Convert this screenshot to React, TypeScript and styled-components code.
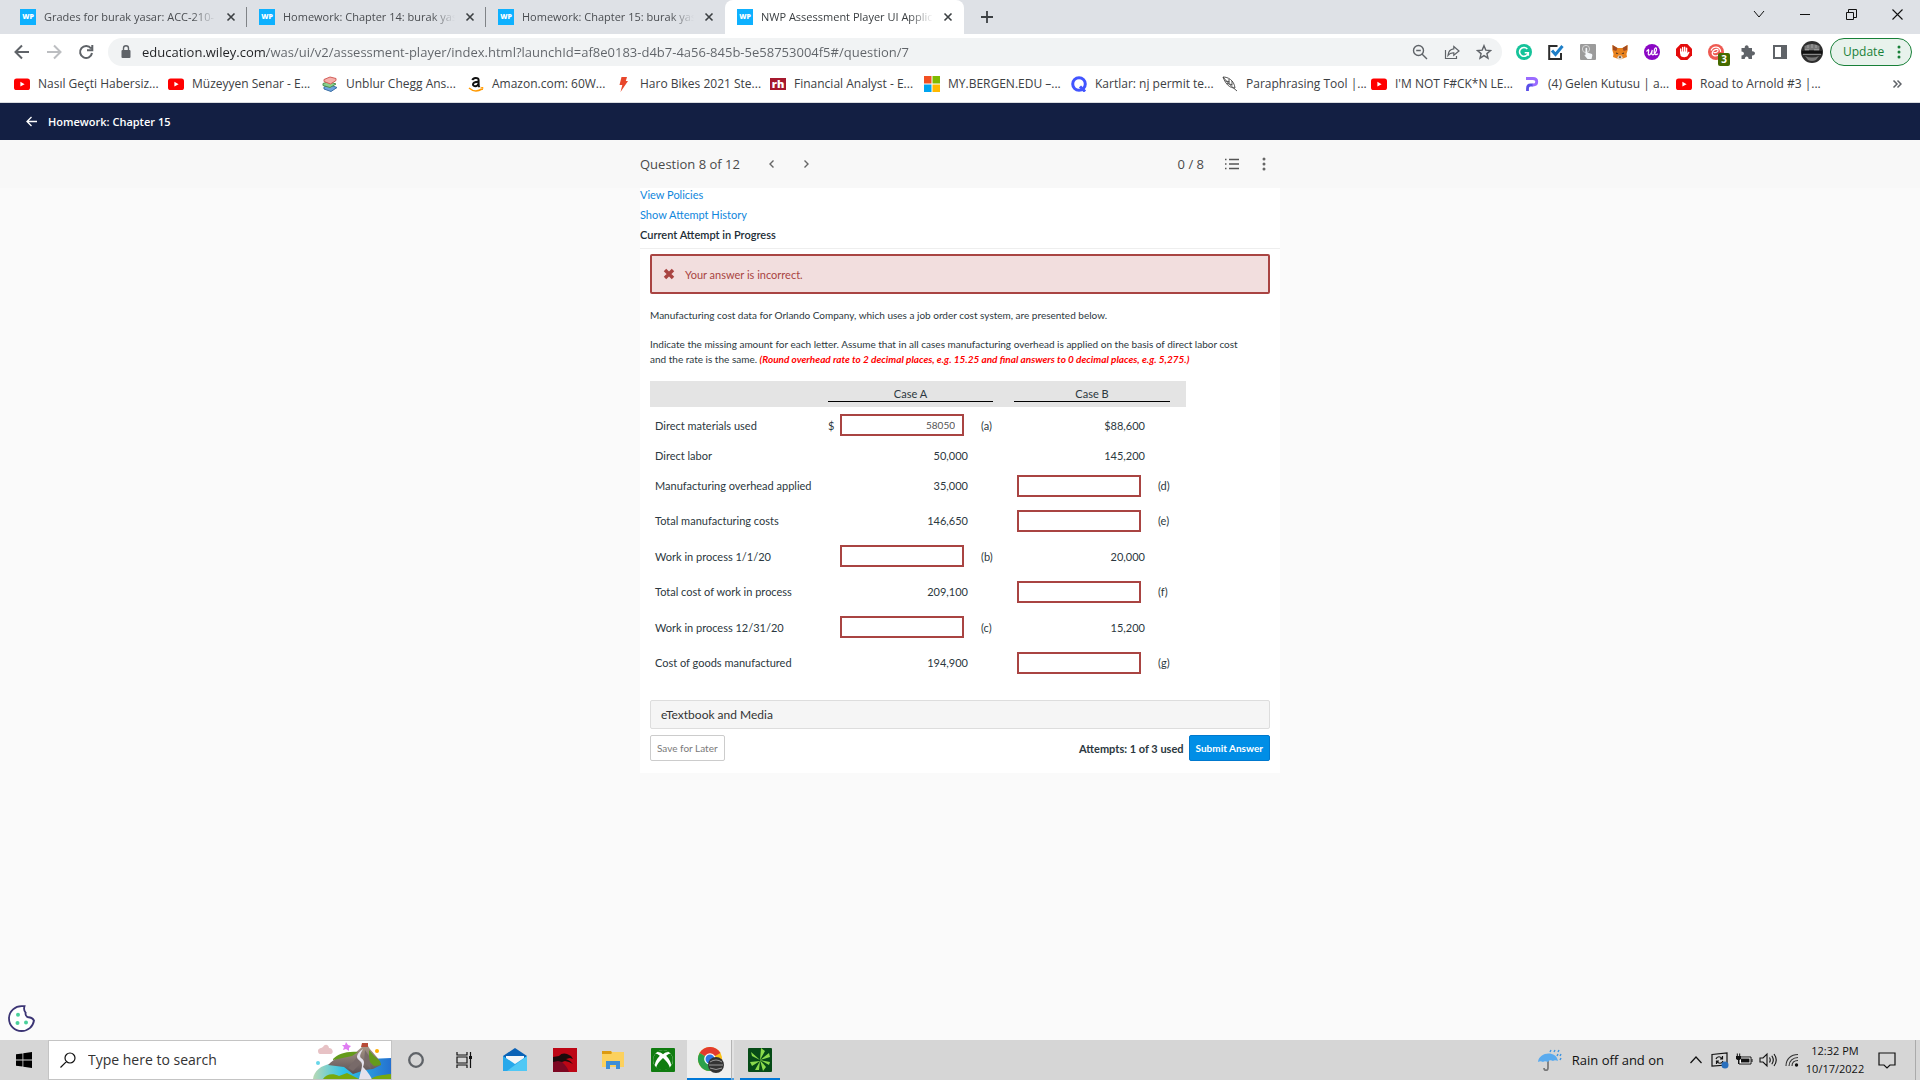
import React from "react";
import styled, { createGlobalStyle } from "styled-components";

const UI_FONT = '"Open Sans", "Noto Sans", sans-serif';
const PAGE_FONT = 'Lato, "Noto Sans", sans-serif';

const GlobalStyle = createGlobalStyle`
  *, *::before, *::after { box-sizing: border-box; }
  body { margin: 0; background: #fafafa; font-family: ${UI_FONT}; }
  button, input { font-family: inherit; }
  button { cursor: pointer; }
  svg { display: block; flex: none; }
`;

const Shell = styled.div`
  display: flex;
  flex-direction: column;
  min-height: 100vh;
`;

const PlainButton = styled.button`
  display: flex;
  align-items: center;
  justify-content: center;
  flex: none;
  padding: 0;
  border: 0;
  background: none;
  color: #5f6368;
`;

/* ---------- Tab strip ---------- */

const TabStrip = styled.header`
  display: flex;
  height: 34px;
  padding-left: 8px;
  background: #dee1e6;
`;

const Tab = styled.div<{ $active?: boolean; $divider?: boolean }>`
  display: flex;
  align-items: center;
  gap: 8px;
  flex: 0 1 239px;
  min-width: 0;
  padding: 0 0 0 12px;
  border-radius: ${(p) => (p.$active ? "8px 8px 0 0" : "0")};
  background: ${(p) => (p.$active ? "#fff" : "none")};
  &::after {
    content: "";
    width: 1px;
    height: 20px;
    background: ${(p) => (p.$divider ? "#808387" : "transparent")};
  }
`;

const WpIcon = styled.span`
  display: flex;
  align-items: center;
  justify-content: center;
  flex: none;
  width: 16px;
  height: 16px;
  background: #0eb1ff;
  color: #fff;
  font-size: 7px;
  font-weight: 800;
  line-height: 16px;
`;

const TabTitle = styled.span<{ $active?: boolean }>`
  flex: 1;
  min-width: 0;
  overflow: hidden;
  white-space: nowrap;
  font-size: 11px;
  line-height: 18px;
  color: ${(p) => (p.$active ? "#3c4043" : "#4a4d51")};
  mask-image: linear-gradient(90deg, #000 calc(100% - 24px), transparent);
`;

const TabClose = styled(PlainButton)`
  width: 14px;
  height: 16px;
  color: #3c4043;
`;

const NewTab = styled(PlainButton)`
  width: 28px;
  height: 34px;
  margin-left: 9px;
  color: #3c4043;
`;

const WindowControls = styled.div`
  display: flex;
  height: 28px;
  margin-left: auto;
`;

const WindowButton = styled(PlainButton)`
  width: 46px;
  color: #111;
`;

/* ---------- Toolbar ---------- */

const Toolbar = styled.nav`
  display: flex;
  align-items: center;
  height: 36px;
  padding: 0 8px 0 6px;
  background: #fff;
`;

const ToolButton = styled(PlainButton)<{ $faded?: boolean }>`
  width: 32px;
  height: 28px;
  color: ${(p) => (p.$faded ? "#bcbec1" : "#5f6368")};
`;

const Omnibox = styled.div`
  display: flex;
  align-items: center;
  flex: 1;
  min-width: 0;
  height: 28px;
  margin: 0 6px;
  padding: 0 2px 0 12px;
  border-radius: 14px;
  background: #f1f3f4;
`;

const UrlInput = styled.input`
  flex: 1;
  min-width: 0;
  margin-left: 10px;
  padding: 0;
  border: 0;
  outline: 0;
  font-size: 13px;
  line-height: 20px;
  color: #5f6368;
  background: linear-gradient(90deg, #202124 0 125px, #5f6368 125px);
  background-clip: text;
  -webkit-text-fill-color: transparent;
`;

const ExtensionButton = styled(ToolButton)`
  position: relative;
`;

const CountBadge = styled.span`
  position: absolute;
  right: 2px;
  bottom: 0;
  width: 12px;
  height: 13px;
  border-radius: 2px;
  background: #456a00;
  color: #fff;
  font-size: 10px;
  font-weight: 700;
  line-height: 13px;
  text-align: center;
`;

const UpdateButton = styled.button`
  display: flex;
  align-items: center;
  justify-content: space-between;
  width: 82px;
  height: 28px;
  margin-left: 2px;
  padding: 0 10px 0 12px;
  border: 1px solid #188038;
  border-radius: 14px;
  background: #e8f2ec;
  color: #188038;
  font-size: 12px;
  line-height: 18px;
`;

/* ---------- Bookmarks ---------- */

const BookmarksBar = styled.nav`
  display: flex;
  align-items: center;
  height: 33px;
  padding: 0 15px 4px 14px;
  border-bottom: 1px solid #dadce0;
  background: #fff;
`;

const Bookmark = styled.a<{ $width: number }>`
  display: flex;
  align-items: center;
  gap: 8px;
  flex: 0 1 ${(p) => p.$width}px;
  min-width: 0;
  white-space: nowrap;
  color: #3c4043;
  font-size: 12px;
  line-height: 18px;
  text-decoration: none;
`;

const LetterMark = styled.span<{ $bg?: string; $color: string }>`
  display: flex;
  align-items: center;
  justify-content: center;
  flex: none;
  width: 16px;
  height: ${(p) => (p.$bg ? "12px" : "16px")};
  background: ${(p) => p.$bg || "none"};
  color: ${(p) => p.$color};
  font-size: 11px;
  font-weight: 800;
  line-height: 12px;
`;

const Overflow = styled(PlainButton)`
  width: 16px;
  height: 20px;
  margin-left: auto;
`;

/* ---------- Assessment ---------- */

const CourseBar = styled.div`
  display: flex;
  align-items: center;
  height: 37px;
  padding: 0 26px;
  gap: 11px;
  background: #131f43;
  color: #fff;
`;

const CourseTitle = styled.h1`
  margin: 0;
  font-size: 11px;
  font-weight: 600;
  line-height: 16px;
`;

const QuestionBar = styled.div`
  height: 48px;
  background: #f8f8f8;
`;

const Column = styled.div`
  width: 100%;
  max-width: 640px;
  margin: 0 auto;
`;

const QuestionNav = styled(Column)`
  display: flex;
  align-items: center;
  height: 100%;
  color: #4a4a4a;
  font-size: 13px;
  line-height: 20px;
`;

const NavButton = styled(PlainButton)`
  width: 32px;
  height: 32px;
  color: #666;
`;

const Arrows = styled.div`
  display: flex;
  gap: 2px;
  margin-left: 16px;
`;

const Score = styled.span`
  margin-left: auto;
  margin-right: 12px;
`;

const Main = styled.main`
  display: flex;
  flex: 1;
  flex-direction: column;
  font-family: ${PAGE_FONT};
`;

const Card = styled(Column)`
  padding-bottom: 12px;
  background: #fff;
  color: #2c3840;
  font-size: 11px;
  line-height: 15px;
`;

const AttemptInfo = styled.div`
  display: flex;
  flex-direction: column;
  align-items: flex-start;
  height: 64px;
  margin-top: -3px;
  border-bottom: 1px solid #eee;
  line-height: 20px;
`;

const BlueLink = styled.a`
  color: #0f86dc;
  text-decoration: none;
`;

const CurrentAttempt = styled.strong`
  color: #222d36;
  font-weight: 600;
`;

const Body = styled.div`
  padding: 5px 10px 0;
`;

const Alert = styled.div`
  display: flex;
  align-items: center;
  gap: 10px;
  height: 40px;
  padding: 0 11px;
  border: 2px solid #a94442;
  border-radius: 2px;
  background: #f2dede;
  color: #a94442;
`;

const Paragraph = styled.p`
  margin: 14px 0 0;
  padding-right: 16px;
  font-size: 10px;
`;

const Hint = styled.em`
  color: #f00;
  font-weight: 700;
`;

const DataTable = styled.table`
  width: 536px;
  margin-top: 14px;
  border-collapse: collapse;
  table-layout: fixed;
  td, th { padding: 0; }
`;

const HeadRow = styled.tr`
  height: 26px;
  background: #e4e4e4;
`;

const HeadCell = styled.th`
  font-weight: 400;
  text-align: center;
`;

const HeadLabel = styled.div`
  border-bottom: 1px solid #000;
  line-height: 15px;
`;

const DataRow = styled.tr<{ $height: number }>`
  height: ${(p) => p.$height}px;
`;

const RowLabel = styled.th`
  font-weight: 400;
  text-align: left;
  && { padding-left: 5px; }
`;

const ValueCell = styled.td<{ $indent?: boolean }>`
  text-align: right;
  && { padding-left: ${(p) => (p.$indent ? 3 : 0)}px; }
`;

const LetterCell = styled.td`
  && { padding-left: 13px; }
`;

const AnswerInput = styled.input`
  display: block;
  width: 124px;
  height: 22px;
  padding: 0 7px;
  border: 2px solid #a94442;
  border-radius: 0;
  outline: 0;
  background: #fff;
  color: #555;
  font-family: ${PAGE_FONT};
  font-size: 10px;
  text-align: right;
`;

const MediaButton = styled.button`
  display: block;
  width: 100%;
  height: 29px;
  margin-top: 20px;
  padding: 0 10px;
  border: 1px solid #ddd;
  border-radius: 2px;
  background: #f5f5f5;
  color: #333;
  font-size: 12px;
  text-align: left;
`;

const Actions = styled.div`
  display: flex;
  align-items: center;
  margin-top: 6px;
`;

const ActionButton = styled.button<{ $primary?: boolean }>`
  height: 26px;
  padding: 0 6px;
  border: 1px solid ${(p) => (p.$primary ? "#0079ce" : "#ccc")};
  border-radius: 2px;
  background: ${(p) => (p.$primary ? "#008ee6" : "#fff")};
  color: ${(p) => (p.$primary ? "#fff" : "#7a7a7a")};
  font-size: 10px;
  font-weight: ${(p) => (p.$primary ? 700 : 400)};
`;

const Attempts = styled.strong`
  margin-left: auto;
  margin-right: 5px;
`;

const CookieButton = styled(PlainButton)`
  width: 27px;
  height: 27px;
  margin: auto 0 8px 8px;
`;

/* ---------- Taskbar ---------- */

const Taskbar = styled.footer`
  display: flex;
  align-items: stretch;
  height: 40px;
  background: #d6d6d6;
  color: #111;
`;

const StartButton = styled(PlainButton)`
  width: 48px;
`;

const SearchBox = styled.label`
  display: flex;
  align-items: center;
  width: 344px;
  padding-left: 11px;
  border: 1px solid #c4c4c4;
  background: #fff;
`;

const SearchInput = styled.input`
  flex: 1;
  min-width: 0;
  margin-left: 12px;
  padding: 0;
  border: 0;
  outline: 0;
  background: none;
  font-size: 14px;
  line-height: 20px;
  &::placeholder { color: #333; opacity: 1; }
`;

const TaskButton = styled(PlainButton)<{ $width: number; $running?: boolean; $active?: boolean }>`
  width: ${(p) => p.$width}px;
  padding-top: ${(p) => (p.$running ? 2 : 0)}px;
  border-bottom: ${(p) => (p.$running ? "2px solid #0078d7" : "0")};
  background: ${(p) => (p.$active ? "#efefef" : "none")};
`;

const StackEdge = styled.span`
  width: 3px;
  margin-right: 6px;
  border-left: 1px solid #b4b4b4;
  border-bottom: 2px solid #4a9fe3;
  background: #e2e2e2;
`;

const Tray = styled.div`
  display: flex;
  align-items: center;
  margin-left: auto;
`;

const Weather = styled.button`
  display: flex;
  align-items: center;
  gap: 10px;
  padding: 0;
  margin-right: 20px;
  border: 0;
  background: none;
  color: #111;
  font-size: 13px;
  line-height: 20px;
`;

const TrayButton = styled(PlainButton)`
  width: 24px;
  height: 40px;
  color: #111;
`;

const Clock = styled.time`
  width: 62px;
  text-align: center;
  font-size: 11px;
  line-height: 18px;
  white-space: nowrap;
`;

const NoticeButton = styled(PlainButton)`
  width: 42px;
  height: 40px;
  color: #111;
`;

const ShowDesktop = styled.span`
  align-self: stretch;
  width: 5px;
  margin-left: 7px;
  border-left: 1px solid #aaa;
`;

/* ---------- Icons ---------- */

type LineProps = { size?: number; box?: number; d: string; width?: number; fill?: string };

const Line = ({ size = 16, box = 16, d, width = 1, fill = "none" }: LineProps) => (
  <svg width={size} height={size} viewBox={`0 0 ${box} ${box}`} fill={fill} stroke="currentColor" strokeWidth={width}>
    <path d={d} />
  </svg>
);

const Dots = ({ color = "currentColor" }: { color?: string }) => (
  <svg width="4" height="16" viewBox="0 0 4 16" fill={color}>
    <circle cx="2" cy="3" r="1.5" />
    <circle cx="2" cy="8" r="1.5" />
    <circle cx="2" cy="13" r="1.5" />
  </svg>
);

const YouTubeIcon = () => (
  <svg width="16" height="16" viewBox="0 0 16 16">
    <rect x="0" y="2.5" width="16" height="11.5" rx="2.6" fill="#f00" />
    <path d="M6.4 5.8v4.8l4.2-2.4z" fill="#fff" />
  </svg>
);

const BooksIcon = () => (
  <svg width="16" height="16" viewBox="0 0 16 16" strokeWidth="1">
    <path d="M2 11l6-2 7 2.5-6 4-7-2.500z" fill="#6da4dd" stroke="#3a6ea5" />
    <path d="M1 7.500l6-2 7 2.500-6 3.500-7-2z" fill="#8bd08b" stroke="#4b9050" />
    <path d="M2 3.500l6-2.500 6 1.500v2L8.500 8 2 5.500z" fill="#f5b1ac" stroke="#d35e59" />
  </svg>
);

const AmazonIcon = () => (
  <svg width="16" height="16" viewBox="0 0 16 16" fill="none">
    <path d="M4.500 4.200C4.800 1.500 10.600 1 10.600 4v5c0 1 .4 1.500 1 2" stroke="#111" strokeWidth="2" />
    <path d="M10.500 5.700C7 5.700 5 6.300 5 8.500s4.500 2.500 5.500-.8" stroke="#111" strokeWidth="2" />
    <path d="M1 12c4 3.500 9 3.500 13 1" stroke="#f90" strokeWidth="1.500" />
    <path d="M12.500 11.800l2.500-.3-.7 2.500" stroke="#f90" />
  </svg>
);

const BoltIcon = () => (
  <svg width="16" height="16" viewBox="0 0 16 16">
    <path d="M5.500 1h5.500L9.800 5H12L4.500 16l1.800-7H3.500z" fill="#e8472b" />
  </svg>
);

const MicrosoftIcon = () => (
  <svg width="16" height="16" viewBox="0 0 16 16">
    <path d="M0 0h7.500v7.500H0z" fill="#f25022" />
    <path d="M8.500 0H16v7.500H8.500z" fill="#7fba00" />
    <path d="M0 8.500h7.500V16H0z" fill="#00a4ef" />
    <path d="M8.500 8.500H16V16H8.500z" fill="#ffb900" />
  </svg>
);

const QuizletIcon = () => (
  <svg width="16" height="16" viewBox="0 0 16 16" fill="none" stroke="#4255ff" strokeWidth="3">
    <circle cx="8" cy="8" r="6.300" />
    <path d="M9 10.500L14 15.500" />
  </svg>
);

const QuillIcon = () => (
  <svg width="16" height="16" viewBox="0 0 16 16" fill="none" stroke="#444" strokeWidth=".9">
    <path d="M1 1c5 0 11 3 12 11-5 0-9-3-12-11zM1 1c4 5 8 9 14 14M3.500 5l4 .8M5 7.500l5 1.200M7 3v4M10 5v4.500" />
  </svg>
);

const PIcon = () => (
  <svg width="16" height="16" viewBox="0 0 16 16" fill="none" strokeWidth="2.800">
    <path d="M2 2.500h7c5 0 5 6.500 0 6.500H8" stroke="#9a6bff" />
    <path d="M3.500 15v-2.500c0-2.500 1-3.500 3-3.500h2" stroke="#5a4fe8" />
  </svg>
);

const LockIcon = () => (
  <svg width="12" height="14" viewBox="0 0 12 14">
    <rect x="1.500" y="5" width="9" height="8" rx="1" fill="#5f6368" />
    <path d="M3.500 5V3.300a2.500 2.500 0 0 1 5 0V5" fill="none" stroke="#5f6368" strokeWidth="1.400" />
  </svg>
);

const ZoomOutIcon = () => (
  <Line d="M6.500 1.500a5 5 0 1 1 0 10a5 5 0 1 1 0-10zM10.200 10.200L15 15M4.200 6.500h4.600" width={1.400} />
);

const ShareIcon = () => (
  <Line d="M1.500 6v8.500h11V12M9.800 2.500L15 7l-5.200 4.200V8.800C7 8.600 5.300 9.500 4 11.300c.3-3.500 2.300-6 5.800-6.400z" width={1.200} />
);

const StarIcon = () => (
  <Line d="M8 1.700l1.800 4.400 4.700.4-3.600 3.100 1.100 4.600-4-2.500-4 2.500 1.100-4.600L1.500 6.500l4.700-.4z" width={1.400} />
);

const GrammarlyIcon = () => (
  <svg width="16" height="16" viewBox="0 0 16 16">
    <circle cx="8" cy="8" r="8" fill="#15c39a" />
    <path d="M11.300 5A4.400 4.400 0 1 0 12.300 8.700H8.700M12.300 8.700v3" fill="none" stroke="#fff" strokeWidth="1.600" />
  </svg>
);

const CheckIcon = () => (
  <svg width="16" height="16" viewBox="0 0 16 16" fill="none">
    <path d="M9.500 2H1.200v13H13V9" stroke="#2d2d2d" strokeWidth="2" />
    <path d="M4 6.500l3.500 4L14.500 2" stroke="#1e7fc8" strokeWidth="3" />
  </svg>
);

const TouchIcon = () => (
  <svg width="16" height="16" viewBox="0 0 16 16">
    <rect width="16" height="16" rx="1" fill="#9b9b9b" />
    <circle cx="6" cy="5" r="3.600" fill="none" stroke="#d5d5d5" />
    <path d="M5.500 4.500c0-1 1.700-1 1.700 0V8.500l4 1.200c1 .3 1.300 1 1.100 2L11.500 15H7.500l-3-3.500c.3-1 .7-.7 1 0z" fill="#f5f8fb" />
  </svg>
);

const FoxIcon = () => (
  <svg width="16" height="16" viewBox="0 0 16 16">
    <path d="M.5 1l5 3h5l5-3 .2 5-1.200 4 .5 3-4 1.500L9.500 15h-3L5 14.500 1 13l.5-3-1.200-4z" fill="#e8821e" />
    <path d="M.5 1l5 3-1.200 3L1 6zM15.500 1l-5 3 1.200 3L15 6z" fill="#a34b20" />
    <path d="M5 14l1.500-2.500h3L11 14l-1.500 1.500h-3z" fill="#e2d3c4" />
    <path d="M4 8.500l2.500 1L4.500 10zM12 8.500l-2.500 1 2 .5zM6.800 12.500h2.400l-.4 1.300H7.200z" fill="#2b2622" />
  </svg>
);

const VioletIcon = () => (
  <svg width="16" height="16" viewBox="0 0 16 16">
    <circle cx="8" cy="8" r="8" fill="#8a06c4" />
    <path d="M2.500 7.500l2-2c1.200.6-1.500 5.500.5 5.500S8 6.500 8.300 6c-.8 3-1 5 .8 4.800 2.500-.6 4.600-6.500 2.700-7-1.500 0-2.600 5.800-.2 6.800 1 .2 1.700-.4 2.200-1" fill="none" stroke="#fff" strokeWidth="1.200" />
  </svg>
);

const HandIcon = () => (
  <svg width="16" height="16" viewBox="0 0 16 16">
    <path d="M4.700 0h6.600L16 4.700v6.600L11.300 16H4.700L0 11.300V4.700z" fill="#e40b0b" />
    <path d="M4.700 9V5M6.700 8V3.500M8.700 8V3.300M10.600 8.500V4.300" stroke="#fff" strokeWidth="1.400" strokeLinecap="round" />
    <path d="M4 7.500h7.300v1.700l1.200-1.400c.6-.4 1.200 0 1 .6l-2 3.600c-1 1.500-6 1.700-7-.5z" fill="#fff" />
  </svg>
);

const CoilIcon = () => (
  <svg width="16" height="16" viewBox="0 0 16 16">
    <circle cx="8" cy="8" r="8" fill="#ee5a52" />
    <path d="M5.500 8.500c3 .5 5-1 4.500-2.500S5 5.500 4.300 8.500s3.200 4.500 6 2.500M12.600 8C12.500 2 5 1.500 3 6.500" fill="none" stroke="#fff" strokeWidth="1.200" />
  </svg>
);

const PuzzleIcon = () => (
  <svg width="16" height="16" viewBox="0 0 16 16">
    <path d="M1.500 4h3.200C4.300.3 9 .3 8.700 4H12v3.400c4-.5 4 4.500 0 4V15H8.600c.2-3.500-4-3.500-3.800 0H1.500v-3.500c3.300 0 3.300-4 0-4z" fill="#5f6368" />
  </svg>
);

const SidePanelIcon = () => (
  <svg width="16" height="16" viewBox="0 0 16 16" fill="#5f6368">
    <path d="M1 1h14v14H1zM3 3v10h6V3z" fillRule="evenodd" />
  </svg>
);

const Portrait = ({ size = 22 }: { size?: number }) => (
  <svg width={size} height={size} viewBox="0 0 22 22">
    <circle cx="11" cy="11" r="11" fill="#2e2e2e" />
    <path d="M3.500 5q7.500-4 15 0v4h-15zM4 15q7 3 14 0l-3 4q-4 2-8 0z" fill="#777" />
    <path d="M1 10h20v3H1z" fill="#111" />
    <path d="M2 13.300h18M4 8.800h4M13 8.800h5M7 4v3M11 3v4M15 4v3" stroke="#aaa" strokeWidth=".9" />
  </svg>
);

const CookieIcon = () => (
  <svg width="27" height="27" viewBox="0 0 27 27">
    <path d="M15.500 1.200C7 .2 1 6.500 1 13.500S6.500 26 13.500 26c6.500 0 11.500-4.300 12.500-10.500-1.500-2.500-3.500-3.500-6-3.200-2-1-3-2.300-2.300-4.500-1.500-1.500-2-4-1.200-6.600z" fill="#fff" stroke="#3b3474" strokeWidth="1.800" />
    <g fill="#4bd09b">
      <circle cx="10" cy="9.800" r="2" />
      <circle cx="9.500" cy="18" r="2" />
      <circle cx="18" cy="17.600" r="2" />
    </g>
  </svg>
);

const WindowsIcon = () => (
  <svg width="16" height="16" viewBox="0 0 16 16" fill="#000">
    <path d="M0 2.300l6.500-.9v6.200H0zM7.300 1.300L16 0v7.600H7.300zM0 8.400h6.500v6.200L0 13.700zM7.300 8.400H16V16l-8.700-1.300z" />
  </svg>
);

const IslandIcon = () => (
  <svg width="78" height="38" viewBox="0 0 78 38">
    <defs>
      <linearGradient id="sea" x1="0" x2="1">
        <stop offset="0" stopColor="#b9d9b4" />
        <stop offset=".4" stopColor="#2fc3ea" />
        <stop offset="1" stopColor="#2470d0" />
      </linearGradient>
      <linearGradient id="rock" x1="0" y1="0" x2="0" y2="1">
        <stop offset="0" stopColor="#a89888" />
        <stop offset="1" stopColor="#5c5055" />
      </linearGradient>
    </defs>
    <path d="M0 38c1-8 8-14 18-15l38-5 22-1v21z" fill="url(#sea)" />
    <path d="M15 24c6-6 14-11 22-12l4 1 9-8 5 0c3 6 12 12 13 19l-8 4-8 1-12 4-9-7z" fill="url(#rock)" />
    <path d="M20 18c5-5 13-8 25-7l-6 4-19 4zM56 9l5 6 6 5 1 4-7 1-5-5z" fill="#649b1b" />
    <path d="M41 20l6-8-1 12-6 6-5-3zM52 9l4 6 2 13-7-7z" fill="#786a69" />
    <path d="M50 8c-8 6-7 9-3 12 4 3 1 8-1 18h13c-4-7-6-9-9-12 2-5 1-7-2-9-2-2 0-5 2-9z" fill="#e5e2ec" />
    <path d="M10 38c3-5 10-6 16-3l8-3 12 6zM58 38c5-4 12-4 20-5v5z" fill="#78a90d" />
    <path d="M49 2h6v4h-7z" fill="#b74b37" />
    <path d="M5 10c0-3 4-3 5-4 2-4 6-2 6 1 4 0 5 5 2 6H7c-1 0-2-1-2-3z" fill="#e7c2c5" />
    <path d="M33 1l2 3 3 1-2 2v3l-3-2-3 1 1-3-2-2h3z" fill="#df7cf2" />
    <circle cx="64" cy="10" r="2" fill="#ffae00" />
    <circle cx="5" cy="22" r="2" fill="#67d6e9" />
  </svg>
);

const TaskViewIcon = () => (
  <svg width="17" height="16" viewBox="0 0 17 16" fill="none" stroke="#111" strokeWidth="1.200">
    <path d="M1 0v3h10V0M1 5h10v6H1zM1 16v-3h10v3M14.500 0v16" />
    <path d="M13 4h3v3h-3z" fill="#111" stroke="none" />
  </svg>
);

const MailIcon = () => (
  <svg width="24" height="24" viewBox="0 0 24 24">
    <path d="M0 8l12-8 12 8v7H0z" fill="#0a62b6" />
    <path d="M3 8h18v9H3z" fill="#f4f6f8" />
    <path d="M0 8l12 8 12-8v15H0z" fill="#28a8ea" />
    <path d="M24 8L4 23h20z" fill="#50c8f5" />
  </svg>
);

const DragonIcon = () => (
  <svg width="24" height="24" viewBox="0 0 24 24">
    <path d="M0 0h24v24H0z" fill="#bd0615" />
    <path d="M0 12l8 1c3 3 6 5 8 11H0z" fill="#7d0722" />
    <path d="M0 9l6-1c2-3 6-3 8-2l4 2 2 3-3-1-4 1 4 2 3 3-4-2-4-1-3 1-4-1-5 1z" fill="#1b0b0b" />
  </svg>
);

const ExplorerIcon = () => (
  <svg width="22" height="20" viewBox="0 0 22 20">
    <path d="M0 1h9l1 1h12v15H0z" fill="#fcd15e" />
    <path d="M0 1h9l1 2-1 1H0z" fill="#dc9a12" />
    <path d="M4 19v-8h14v8h-4v-4H8v4z" fill="#3f8ed6" />
  </svg>
);

const XboxIcon = () => (
  <svg width="24" height="24" viewBox="0 0 24 24">
    <rect width="24" height="24" rx="1" fill="#107c10" />
    <circle cx="12" cy="12" r="10" fill="#fff" />
    <path d="M5.800 4.200c2.200-.4 4.200.6 6.200 2 2-1.400 4-2.400 6.200-2C14.500 1.200 9.500 1.200 5.800 4.200zM12 10c3.500 3 6.500 7 6.700 9.500-3.500 3.500-9.900 3.500-13.400 0C5.500 17 8.500 13 12 10zM8.800 7.800C5.500 11 4 14.500 3.900 17.300 1.300 13.500 1.600 8.600 4.700 5.400c1.300.3 2.700 1.100 4.100 2.400zM15.200 7.800c3.300 3.200 4.800 6.700 4.900 9.500 2.600-3.800 2.300-8.700-.8-11.900-1.300.3-2.700 1.100-4.100 2.400z" fill="#107c10" />
  </svg>
);

const ChromeIcon = () => (
  <svg width="30" height="26" viewBox="-4 0 30 26">
    <circle cx="12" cy="12" r="12" fill="#fbc116" />
    <path d="M12 12L1.600 6A12 12 0 0 1 22.400 6z" fill="#e33b2e" />
    <path d="M12 12L1.600 6A12 12 0 0 0 12 24l4-8z" fill="#2aa14b" />
    <circle cx="12" cy="12" r="5.800" fill="#fff" />
    <circle cx="12" cy="12" r="4.500" fill="#2e76e5" />
    <circle cx="18" cy="18" r="8" fill="#333" />
    <path d="M12 15q6-4 12 0M11 18h14M12 21q6 3 12 0" stroke="#999" fill="none" />
  </svg>
);

const BurstIcon = () => (
  <svg width="24" height="24" viewBox="0 0 24 24">
    <rect width="24" height="24" rx="1" fill="#064b17" />
    <path d="M12 12L13 0l4 3zM12 12L3 4l1 4zM12 12L21 5l1 4zM12 13L2 14l2 4zM12 13l-5 9h4zM12 12l3 11 3-4zM12 12l10 2-1 3z" fill="#8bdb4c" />
  </svg>
);

const UmbrellaIcon = () => (
  <svg width="24" height="24" viewBox="0 0 24 24">
    <path d="M10 7v13c0 3-4 3-4 0" fill="none" stroke="#777" strokeWidth="1.700" />
    <path d="M0 14C1 4 18 2 20 13c-2-1-4-1-5 0-2-1-4-1-5 1-2-1-4-1-5 0-2-1-3-1-5 0z" fill="#5aabef" />
    <path d="M12 4l1-2M16 4l1-2M20 4l1-2M19 8l1-2M22 8l1-2M22 12l1-2" stroke="#3c93e0" strokeWidth="1.400" />
  </svg>
);

const SyncIcon = () => (
  <svg width="18" height="18" viewBox="0 0 18 18" fill="none" stroke="#111" strokeWidth="1.200">
    <path d="M1 3.500L16 2v12L1 15z" />
    <path d="M5 8c1-3 5-3 6 0M11.500 5v3H9M12 10c-1 3-5 3-6 0M5.500 13v-3H8" />
    <circle cx="14" cy="14" r="3.500" fill="#2a70bd" stroke="none" />
  </svg>
);

const BatteryIcon = () => (
  <svg width="18" height="16" viewBox="0 0 18 16">
    <path d="M4 5h12v7H4z" fill="#fff" stroke="#111" />
    <path d="M6 6.500h8.500v4H6z" fill="#111" />
    <path d="M16.500 7h1v3h-1zM1 4h5v3L4.500 8h-2L1 7z" fill="#111" />
    <path d="M2.300 1.500V4M4.700 1.500V4M3.500 8v4" stroke="#111" />
  </svg>
);

const SpeakerIcon = () => (
  <Line size={18} box={18} d="M1 7h3l4-4v12l-4-4H1zM10.500 6.500q1.500 2.500 0 5M12.800 4.700q3 4.300 0 8.600M15 3q4.500 6 0 12" width={1.100} />
);

const WifiIcon = () => (
  <svg width="16" height="16" viewBox="0 0 16 16" fill="none" stroke="#333" strokeWidth="1.100">
    <path d="M2 14C2 7 7 2.500 14 2.500M5 14c0-5 4-8.500 9-8.500M8 14c0-3.500 2.500-5.500 6-5.500" />
    <circle cx="12.500" cy="13" r="1.700" fill="#111" stroke="none" />
  </svg>
);

const ListIcon = () => (
  <svg width="14" height="14" viewBox="0 0 14 14" stroke="#555" strokeWidth="1.300">
    <path d="M4 2.500h10M4 7h10M4 11.500h10" />
    <path d="M0 2.500h2M0 7h2M0 11.500h2" strokeDasharray="1.500 .5" />
  </svg>
);

/* ---------- Data ---------- */

const tabs = [
  { title: "Grades for burak yasar: ACC-210-", divider: true },
  { title: "Homework: Chapter 14: burak yas", divider: true },
  { title: "Homework: Chapter 15: burak yas" },
  { title: "NWP Assessment Player UI Applic", active: true },
];

const bookmarks = [
  { label: "Nasıl Geçti Habersiz...", icon: <YouTubeIcon />, width: 154 },
  { label: "Müzeyyen Senar - E...", icon: <YouTubeIcon />, width: 154 },
  { label: "Unblur Chegg Ans...", icon: <BooksIcon />, width: 146 },
  { label: "Amazon.com: 60W...", icon: <AmazonIcon />, width: 148 },
  { label: "Haro Bikes 2021 Ste...", icon: <BoltIcon />, width: 154 },
  { label: "Financial Analyst - E...", icon: <LetterMark $bg="#a6192e" $color="#fff">rh</LetterMark>, width: 154 },
  { label: "MY.BERGEN.EDU –...", icon: <MicrosoftIcon />, width: 147 },
  { label: "Kartlar: nj permit te...", icon: <QuizletIcon />, width: 151 },
  { label: "Paraphrasing Tool |...", icon: <QuillIcon />, width: 149 },
  { label: "I'M NOT F#CK*N LE...", icon: <YouTubeIcon />, width: 153 },
  { label: "(4) Gelen Kutusu | a...", icon: <PIcon />, width: 152 },
  { label: "Road to Arnold #3 |...", icon: <YouTubeIcon />, width: 154 },
];

const extensions = [
  { name: "Grammarly", icon: <GrammarlyIcon /> },
  { name: "Tasks", icon: <CheckIcon /> },
  { name: "Click tool", icon: <TouchIcon /> },
  { name: "MetaMask", icon: <FoxIcon /> },
  { name: "Writer", icon: <VioletIcon /> },
  { name: "AdBlock", icon: <HandIcon /> },
  { name: "Coupons", icon: <CoilIcon />, count: 3 },
  { name: "Extensions", icon: <PuzzleIcon /> },
  { name: "Side panel", icon: <SidePanelIcon /> },
  { name: "Profile", icon: <Portrait /> },
];

type Cell = { value?: string; letter?: string; answer?: string };
type Row = { label: string; height: number; a: Cell; b: Cell };

const rows: Row[] = [
  { label: "Direct materials used", height: 36, a: { letter: "(a)", answer: "58050" }, b: { value: "$88,600" } },
  { label: "Direct labor", height: 25, a: { value: "50,000" }, b: { value: "145,200" } },
  { label: "Manufacturing overhead applied", height: 35, a: { value: "35,000" }, b: { letter: "(d)" } },
  { label: "Total manufacturing costs", height: 35, a: { value: "146,650" }, b: { letter: "(e)" } },
  { label: "Work in process 1/1/20", height: 36, a: { letter: "(b)" }, b: { value: "20,000" } },
  { label: "Total cost of work in process", height: 35, a: { value: "209,100" }, b: { letter: "(f)" } },
  { label: "Work in process 12/31/20", height: 36, a: { letter: "(c)" }, b: { value: "15,200" } },
  { label: "Cost of goods manufactured", height: 35, a: { value: "194,900" }, b: { letter: "(g)" } },
];

const CaseCells = ({ cell, label, indent }: { cell: Cell; label: string; indent?: boolean }) => (
  <>
    <ValueCell $indent={indent && !cell.value}>
      {cell.value ?? <AnswerInput aria-label={label} defaultValue={cell.answer ?? ""} />}
    </ValueCell>
    <LetterCell>{cell.letter}</LetterCell>
  </>
);

const Browser = () => (
  <>
    <TabStrip>
      {tabs.map((t) => (
        <Tab key={t.title} $active={t.active} $divider={t.divider}>
          <WpIcon>WP</WpIcon>
          <TabTitle $active={t.active}>{t.title}</TabTitle>
          <TabClose aria-label="Close tab">
            <Line size={10} box={10} d="M1.500 1.500l7 7M8.500 1.500l-7 7" width={1.600} />
          </TabClose>
        </Tab>
      ))}
      <NewTab aria-label="New tab">
        <Line size={14} box={14} d="M7 1v12M1 7h12" width={1.800} />
      </NewTab>
      <WindowControls>
        <WindowButton aria-label="Search tabs"><Line size={12} box={12} d="M1 3l5 6 5-6" /></WindowButton>
        <WindowButton aria-label="Minimize"><Line size={10} box={10} d="M0 5.500h10" /></WindowButton>
        <WindowButton aria-label="Restore"><Line size={11} box={11} d="M.5 3.500h7v7h-7zM2.500 3V.5h8v8H8" /></WindowButton>
        <WindowButton aria-label="Close"><Line size={11} box={11} d="M.5.5l10 10M10.500.5l-10 10" width={1.100} /></WindowButton>
      </WindowControls>
    </TabStrip>
    <Toolbar>
      <ToolButton aria-label="Back"><Line d="M15 8H2M8 1.500L1.500 8 8 14.500" width={2} /></ToolButton>
      <ToolButton aria-label="Forward" $faded><Line d="M1 8h13M8 1.500L14.500 8 8 14.500" width={2} /></ToolButton>
      <ToolButton aria-label="Reload"><Line d="M13 4.500A6 6 0 1 0 14 9M14.300 1v5.200H9" width={2} /></ToolButton>
      <Omnibox>
        <LockIcon />
        <UrlInput
          aria-label="Address"
          defaultValue="education.wiley.com/was/ui/v2/assessment-player/index.html?launchId=af8e0183-d4b7-4a56-845b-5e58753004f5#/question/7"
        />
        <ToolButton aria-label="Zoom"><ZoomOutIcon /></ToolButton>
        <ToolButton aria-label="Share"><ShareIcon /></ToolButton>
        <ToolButton aria-label="Bookmark"><StarIcon /></ToolButton>
      </Omnibox>
      {extensions.map((e) => (
        <ExtensionButton key={e.name} aria-label={e.name}>
          {e.icon}
          {e.count && <CountBadge>{e.count}</CountBadge>}
        </ExtensionButton>
      ))}
      <UpdateButton>Update<Dots /></UpdateButton>
    </Toolbar>
    <BookmarksBar>
      {bookmarks.map((b) => (
        <Bookmark key={b.label} href="#" $width={b.width}>{b.icon}{b.label}</Bookmark>
      ))}
      <Overflow aria-label="More bookmarks">
        <Line size={10} box={10} d="M1.500 1.500L5 5 1.500 8.500M5.500 1.500L9 5 5.500 8.500" width={1.500} />
      </Overflow>
    </BookmarksBar>
  </>
);

const Assessment = () => (
  <>
    <CourseBar>
      <Line size={11} box={11} d="M11 5.500H1.500M5.500 1L1 5.500 5.500 10" width={1.300} />
      <CourseTitle>Homework: Chapter 15</CourseTitle>
    </CourseBar>
    <QuestionBar>
      <QuestionNav>
        Question 8 of 12
        <Arrows>
          <NavButton aria-label="Previous question"><Line size={10} box={10} d="M6.500 1.500L3 5l3.500 3.500" width={1.400} /></NavButton>
          <NavButton aria-label="Next question"><Line size={10} box={10} d="M3.500 1.500L7 5 3.500 8.500" width={1.400} /></NavButton>
        </Arrows>
        <Score>0 / 8</Score>
        <NavButton aria-label="Question list"><ListIcon /></NavButton>
        <NavButton aria-label="More options"><Dots /></NavButton>
      </QuestionNav>
    </QuestionBar>
    <Main>
      <Card>
        <AttemptInfo>
          <BlueLink href="#">View Policies</BlueLink>
          <BlueLink href="#">Show Attempt History</BlueLink>
          <CurrentAttempt>Current Attempt in Progress</CurrentAttempt>
        </AttemptInfo>
        <Body>
          <Alert role="alert">
            <Line size={12} box={12} d="M2 2l8 8M10 2l-8 8" width={3.500} />
            Your answer is incorrect.
          </Alert>
          <Paragraph>Manufacturing cost data for Orlando Company, which uses a job order cost system, are presented below.</Paragraph>
          <Paragraph>
            Indicate the missing amount for each letter. Assume that in all cases manufacturing overhead is applied on the basis of direct labor cost and the rate is the same.{" "}
            <Hint>(Round overhead rate to 2 decimal places, e.g. 15.25 and final answers to 0 decimal places, e.g. 5,275.)</Hint>
          </Paragraph>
          <DataTable>
            <colgroup>
              {[178, 12, 128, 25, 21, 131, 25, 16].map((w, i) => <col key={i} width={w} />)}
            </colgroup>
            <thead>
              <HeadRow>
                <td />
                <HeadCell colSpan={3} scope="colgroup"><HeadLabel>Case A</HeadLabel></HeadCell>
                <td />
                <HeadCell colSpan={2} scope="colgroup"><HeadLabel>Case B</HeadLabel></HeadCell>
                <td />
              </HeadRow>
            </thead>
            <tbody>
              {rows.map((r, i) => (
                <DataRow key={r.label} $height={r.height}>
                  <RowLabel scope="row">{r.label}</RowLabel>
                  <td>{i === 0 ? "$" : ""}</td>
                  <CaseCells cell={r.a} label={`${r.label}, Case A`} />
                  <td />
                  <CaseCells cell={r.b} label={`${r.label}, Case B`} indent />
                  <td />
                </DataRow>
              ))}
            </tbody>
          </DataTable>
          <MediaButton>eTextbook and Media</MediaButton>
          <Actions>
            <ActionButton>Save for Later</ActionButton>
            <Attempts>Attempts: 1 of 3 used</Attempts>
            <ActionButton $primary>Submit Answer</ActionButton>
          </Actions>
        </Body>
      </Card>
      <CookieButton aria-label="Cookie settings"><CookieIcon /></CookieButton>
    </Main>
  </>
);

const WindowsTaskbar = () => (
  <Taskbar>
    <StartButton aria-label="Start"><WindowsIcon /></StartButton>
    <SearchBox>
      <Line d="M10 1a5 5 0 1 1 0 10a5 5 0 1 1 0-10zM6.400 9.600L.5 15.500" width={1.200} />
      <SearchInput aria-label="Search" placeholder="Type here to search" />
      <IslandIcon />
    </SearchBox>
    <TaskButton $width={48} aria-label="Cortana">
      <Line d="M8 1.200a6.800 6.800 0 1 1 0 13.600a6.800 6.800 0 1 1 0-13.600z" width={2.300} />
    </TaskButton>
    <TaskButton $width={48} aria-label="Task view"><TaskViewIcon /></TaskButton>
    <TaskButton $width={54} aria-label="Mail"><MailIcon /></TaskButton>
    <TaskButton $width={45} aria-label="Dragon Center"><DragonIcon /></TaskButton>
    <TaskButton $width={52} aria-label="File Explorer"><ExplorerIcon /></TaskButton>
    <TaskButton $width={48} aria-label="Xbox"><XboxIcon /></TaskButton>
    <TaskButton $width={44} $running $active aria-label="Chrome"><ChromeIcon /></TaskButton>
    <StackEdge />
    <TaskButton $width={40} $running aria-label="Razer"><BurstIcon /></TaskButton>
    <Tray>
      <Weather><UmbrellaIcon />Rain off and on</Weather>
      <TrayButton aria-label="Show hidden icons"><Line size={14} box={14} d="M1.500 10L7 4l5.500 6" width={1.200} /></TrayButton>
      <TrayButton aria-label="Updates"><SyncIcon /></TrayButton>
      <TrayButton aria-label="Battery"><BatteryIcon /></TrayButton>
      <TrayButton aria-label="Volume"><SpeakerIcon /></TrayButton>
      <TrayButton aria-label="Network"><WifiIcon /></TrayButton>
      <Clock>12:32 PM<br />10/17/2022</Clock>
      <NoticeButton aria-label="Notifications">
        <Line size={18} box={18} d="M1 2h16v12h-5l-3 3-3-3H1z" width={1.200} />
      </NoticeButton>
      <ShowDesktop />
    </Tray>
  </Taskbar>
);

export default function App() {
  return (
    <Shell>
      <GlobalStyle />
      <Browser />
      <Assessment />
      <WindowsTaskbar />
    </Shell>
  );
}
